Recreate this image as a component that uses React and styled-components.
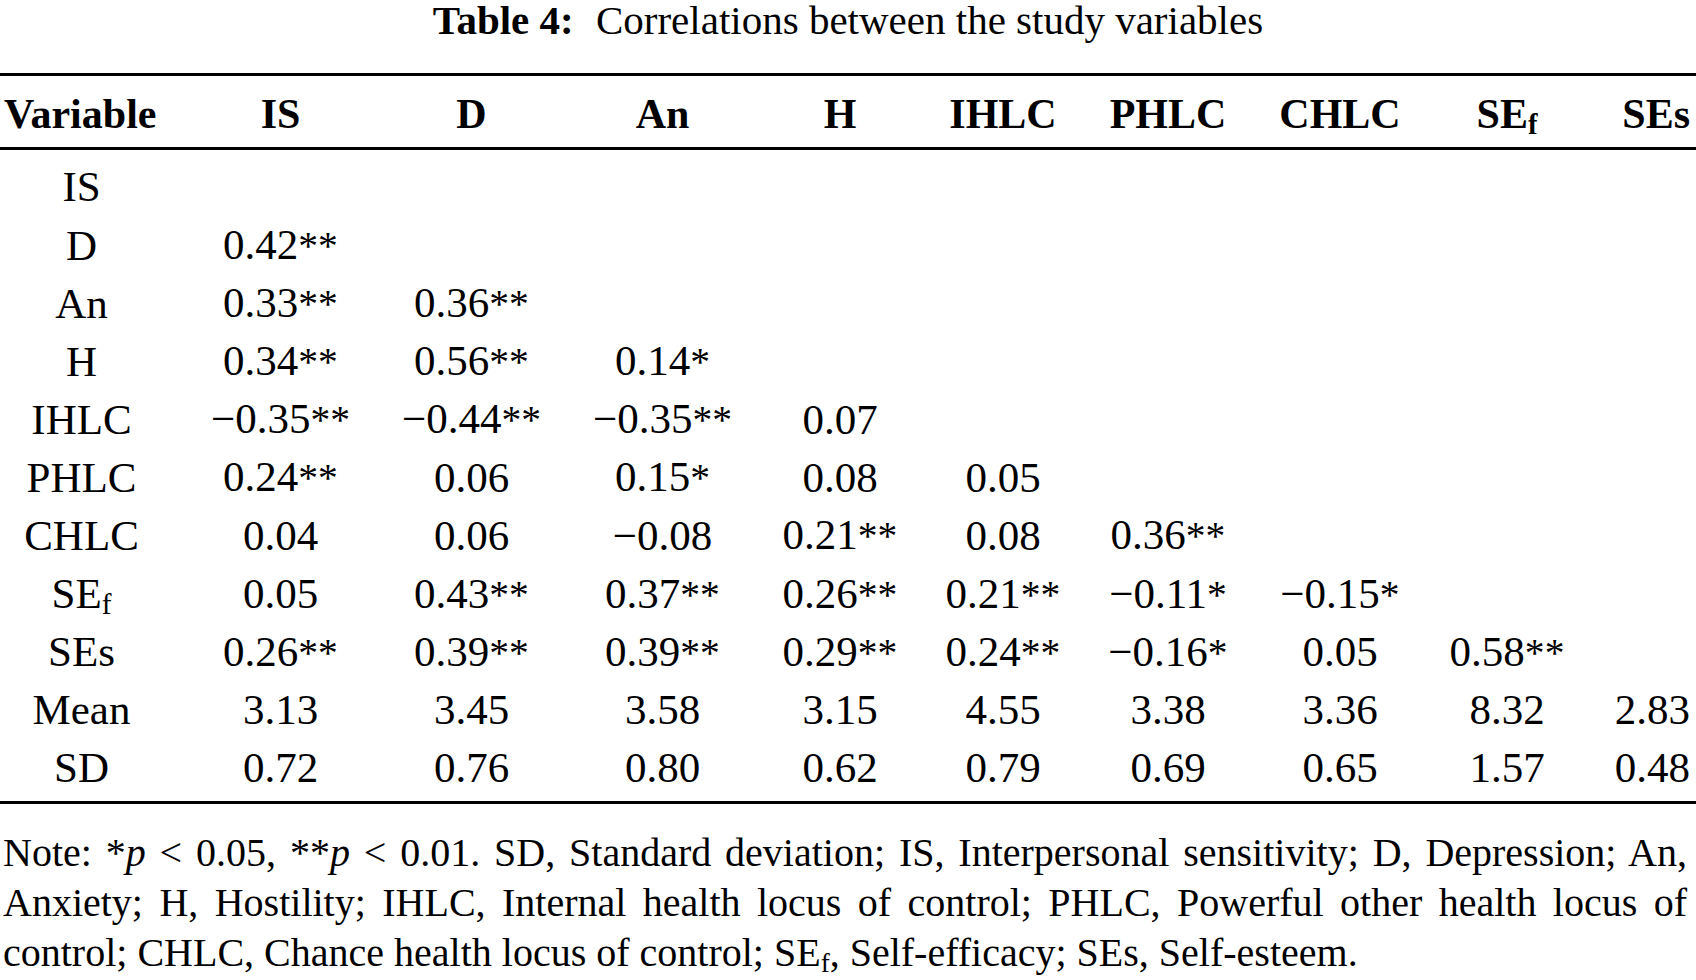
import React from 'react'
import styled, { createGlobalStyle } from 'styled-components'

const GlobalStyle = createGlobalStyle`
  html, body {
    margin: 0;
    padding: 0;
    background: #fff;
  }
  body {
    width: 1696px;
    overflow: hidden;
    color: #000;
    font-family: "Liberation Serif", "Times New Roman", serif;
  }
`

const COLUMNS = '163px 235px 147px 235px 120px 206px 124px 220px 114px 1fr'

const headers = ['IS', 'D', 'An', 'H', 'IHLC', 'PHLC', 'CHLC', ['SE', 'f'], 'SEs']

const rows = [
  { label: 'IS', values: [] },
  { label: 'D', values: ['0.42**'] },
  { label: 'An', values: ['0.33**', '0.36**'] },
  { label: 'H', values: ['0.34**', '0.56**', '0.14*'] },
  { label: 'IHLC', values: ['−0.35**', '−0.44**', '−0.35**', '0.07'] },
  { label: 'PHLC', values: ['0.24**', '0.06', '0.15*', '0.08', '0.05'] },
  { label: 'CHLC', values: ['0.04', '0.06', '−0.08', '0.21**', '0.08', '0.36**'] },
  { label: ['SE', 'f'], values: ['0.05', '0.43**', '0.37**', '0.26**', '0.21**', '−0.11*', '−0.15*'] },
  { label: 'SEs', values: ['0.26**', '0.39**', '0.39**', '0.29**', '0.24**', '−0.16*', '0.05', '0.58**'] },
  { label: 'Mean', values: ['3.13', '3.45', '3.58', '3.15', '4.55', '3.38', '3.36', '8.32', '2.83'] },
  { label: 'SD', values: ['0.72', '0.76', '0.80', '0.62', '0.79', '0.69', '0.65', '1.57', '0.48'] },
]

const Page = styled.div`
  width: 1696px;
  display: flex;
  flex-direction: column;
`

const Caption = styled.div`
  font-size: 41px;
  line-height: 40px;
  text-align: center;
  margin: 0 0 33px;
  white-space: nowrap;

  b {
    font-weight: 700;
    margin-right: 12px;
  }
`

const Table = styled.div`
  border-top: 3px solid #000;
  border-bottom: 3px solid #000;
`

const Row = styled.div`
  display: grid;
  grid-template-columns: ${COLUMNS};
  align-items: center;
  box-sizing: border-box;
  height: ${(p) => (p.$head ? '71px' : '58.08px')};
  padding-top: ${(p) => (p.$head ? '6px' : '0')};
  font-size: ${(p) => (p.$head ? '42px' : '43px')};
  font-weight: ${(p) => (p.$head ? 700 : 400)};
  line-height: ${(p) => (p.$head ? '65px' : '58px')};
`

const Head = styled.div`
  border-bottom: 3px solid #000;
`

const Body = styled.div`
  padding: 8px 0 4px;
`

const Cell = styled.div`
  white-space: nowrap;
  justify-self: ${(p) => p.$align || 'center'};
  padding-left: ${(p) => (p.$align === 'start' ? '4px' : '0')};
  padding-right: ${(p) => (p.$align === 'end' ? '6px' : '0')};
`

const Sub = styled.sub`
  font-size: 0.68em;
  vertical-align: -0.22em;
  line-height: 0;
`

const Stars = styled.span`
  font-size: 0.92em;
`

const Note = styled.div`
  margin-top: 24px;
  padding: 0 9px 0 3px;
  font-size: 40px;
  line-height: 50px;

  i {
    font-style: italic;
  }
`

const NoteLine = styled.div`
  white-space: nowrap;
  text-align: ${(p) => (p.$last ? 'left' : 'justify')};
  text-align-last: ${(p) => (p.$last ? 'left' : 'justify')};
`

const Label = ({ value }) =>
  Array.isArray(value) ? (
    <>
      {value[0]}
      <Sub>{value[1]}</Sub>
    </>
  ) : (
    value
  )

const Value = ({ text }) => {
  const m = text.match(/^([^*]+)(\**)$/)
  return (
    <>
      {m[1]}
      {m[2] && <Stars>{m[2]}</Stars>}
    </>
  )
}

const App = () => {
  return (
    <Page>
      <GlobalStyle />
      <Caption>
        <b>Table 4:</b> Correlations between the study variables
      </Caption>

      <Table>
        <Head>
          <Row $head>
            <Cell $align="start">Variable</Cell>
            {headers.map((h, i) => (
              <Cell key={i} $align={i === headers.length - 1 ? 'end' : 'center'}>
                <Label value={h} />
              </Cell>
            ))}
          </Row>
        </Head>
        <Body>
          {rows.map((r, ri) => (
            <Row key={ri}>
              <Cell>
                <Label value={r.label} />
              </Cell>
              {r.values.map((v, i) => (
                <Cell key={i} $align={i === 8 ? 'end' : 'center'}>
                  <Value text={v} />
                </Cell>
              ))}
            </Row>
          ))}
        </Body>
      </Table>

      <Note>
        <NoteLine>
          Note: *<i>p</i> &lt; 0.05, **<i>p</i> &lt; 0.01. SD, Standard deviation; IS, Interpersonal sensitivity; D,
          Depression; An,
        </NoteLine>
        <NoteLine>
          Anxiety; H, Hostility; IHLC, Internal health locus of control; PHLC, Powerful other health locus of
        </NoteLine>
        <NoteLine $last>
          control; CHLC, Chance health locus of control; SE<Sub>f</Sub>, Self-efficacy; SEs, Self-esteem.
        </NoteLine>
      </Note>
    </Page>
  )
}

export default App
